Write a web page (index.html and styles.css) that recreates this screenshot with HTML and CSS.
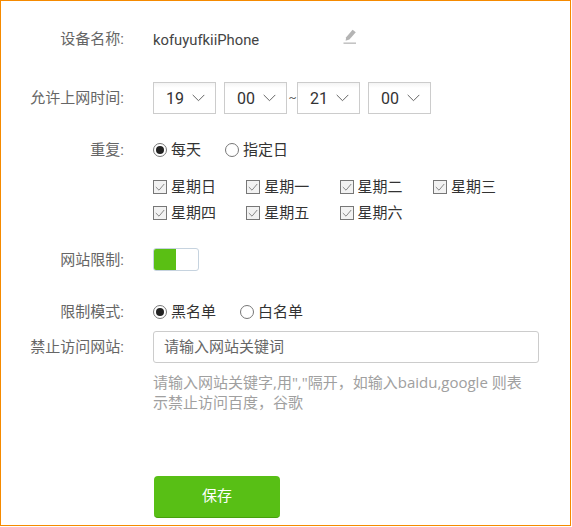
FILE: index.html
```html
<!DOCTYPE html>
<html lang="zh">
<head>
<meta charset="utf-8">
<title>设备设置</title>
<link rel="stylesheet" href="styles.css">
</head>
<body>
<div class="frame">
  <div class="row row-name">
    <div class="label">设备名称:</div>
    <div class="value name-value">
      <span class="device">kofuyufkiiPhone</span>
      <svg class="edit" width="14" height="16" viewBox="0 0 14 16"><path d="M9.6 0.8 L12.8 3.2 L6.4 10.6 L2.6 11.8 L3.2 8.2 Z" fill="#b4b4b4"/><path d="M0.5 14.2 H13" stroke="#c4c4c4" stroke-width="1.6" fill="none"/></svg>
    </div>
  </div>
  <div class="row row-time">
    <div class="label">允许上网时间:</div>
    <div class="value times">
      <div class="select"><span>19</span><svg class="chev" width="13" height="8" viewBox="0 0 13 8"><path d="M0.7 0.9 L6.5 6.7 L12.3 0.9" fill="none" stroke="#666" stroke-width="1"/></svg></div>
      <div class="select"><span>00</span><svg class="chev" width="13" height="8" viewBox="0 0 13 8"><path d="M0.7 0.9 L6.5 6.7 L12.3 0.9" fill="none" stroke="#666" stroke-width="1"/></svg></div>
      <span class="tilde">~</span>
      <div class="select"><span>21</span><svg class="chev" width="13" height="8" viewBox="0 0 13 8"><path d="M0.7 0.9 L6.5 6.7 L12.3 0.9" fill="none" stroke="#666" stroke-width="1"/></svg></div>
      <div class="select"><span>00</span><svg class="chev" width="13" height="8" viewBox="0 0 13 8"><path d="M0.7 0.9 L6.5 6.7 L12.3 0.9" fill="none" stroke="#666" stroke-width="1"/></svg></div>
    </div>
  </div>
  <div class="row row-repeat">
    <div class="label">重复:</div>
    <div class="value radios">
      <span class="radio-item r-daily"><span class="radio on"></span>每天</span>
      <span class="radio-item"><span class="radio"></span>指定日</span>
    </div>
  </div>
  <div class="row row-days">
    <div class="label"></div>
    <div class="value days">
      <span class="day"><span class="check"><svg width="10" height="9" viewBox="0 0 10 9"><path d="M0.8 4 L4 7.2 L9.2 1" fill="none" stroke="#888" stroke-width="1"/></svg></span>星期日</span>
      <span class="day"><span class="check"><svg width="10" height="9" viewBox="0 0 10 9"><path d="M0.8 4 L4 7.2 L9.2 1" fill="none" stroke="#888" stroke-width="1"/></svg></span>星期一</span>
      <span class="day"><span class="check"><svg width="10" height="9" viewBox="0 0 10 9"><path d="M0.8 4 L4 7.2 L9.2 1" fill="none" stroke="#888" stroke-width="1"/></svg></span>星期二</span>
      <span class="day"><span class="check"><svg width="10" height="9" viewBox="0 0 10 9"><path d="M0.8 4 L4 7.2 L9.2 1" fill="none" stroke="#888" stroke-width="1"/></svg></span>星期三</span>
      <span class="day"><span class="check"><svg width="10" height="9" viewBox="0 0 10 9"><path d="M0.8 4 L4 7.2 L9.2 1" fill="none" stroke="#888" stroke-width="1"/></svg></span>星期四</span>
      <span class="day"><span class="check"><svg width="10" height="9" viewBox="0 0 10 9"><path d="M0.8 4 L4 7.2 L9.2 1" fill="none" stroke="#888" stroke-width="1"/></svg></span>星期五</span>
      <span class="day"><span class="check"><svg width="10" height="9" viewBox="0 0 10 9"><path d="M0.8 4 L4 7.2 L9.2 1" fill="none" stroke="#888" stroke-width="1"/></svg></span>星期六</span>
    </div>
  </div>
  <div class="row row-switch">
    <div class="label">网站限制:</div>
    <div class="value"><div class="switch"><span class="switch-on"></span></div></div>
  </div>
  <div class="row row-mode">
    <div class="label">限制模式:</div>
    <div class="value radios">
      <span class="radio-item r-black"><span class="radio on"></span>黑名单</span>
      <span class="radio-item"><span class="radio"></span>白名单</span>
    </div>
  </div>
  <div class="row row-site">
    <div class="label">禁止访问网站:</div>
    <div class="value"><div class="input">请输入网站关键词</div></div>
  </div>
  <div class="row row-hint">
    <div class="label"></div>
    <div class="value hint">请输入网站关键字,用","隔开，如输入baidu,google 则表示禁止访问百度，谷歌</div>
  </div>
  <div class="row row-save">
    <div class="label"></div>
    <div class="value"><div class="save">保存</div></div>
  </div>
</div>
</body>
</html>
```
FILE: styles.css
```css
* { box-sizing: border-box; }
html, body { margin: 0; padding: 0; background: #fff; }
body {
  font-family: Roboto, "Noto Sans CJK SC", sans-serif;
  font-size: 15px;
  color: #333;
}
.frame {
  width: 571px;
  height: 526px;
  border: 1px solid #f58a00;
  padding-top: 28px;
  overflow: hidden;
}
.row { display: flex; align-items: center; }
.label {
  width: 123px;
  flex: none;
  text-align: right;
  color: #666;
  line-height: 20px;
}
.value { margin-left: 29px; flex: none; width: 386px; }
.row-name { height: 20px; }
.name-value { display: flex; align-items: center; }
.device { width: 190px; color: #444; font-size: 14.8px; padding-top: 1px; }
.edit { margin-top: -5px; }
.row-time { margin-top: 33px; height: 32px; }
.times { display: flex; align-items: center; }
.select {
  width: 63px;
  height: 32px;
  border: 1px solid #ccc;
  background: linear-gradient(#f4f4f4, #fff 5px);
  display: flex;
  align-items: center;
  padding-left: 12px;
  font-size: 16px;
  color: #333;
  margin-right: 8px;
}
.select span { width: 25px; }
.chev { margin-left: 1px; }
.tilde { margin: 0 0 0 -7px; width: 9px; color: #666; font-size: 12px; text-align: center; }
.row-repeat { margin-top: 26px; height: 20px; }
.radios { display: flex; align-items: center; }
.radio-item { display: flex; align-items: center; color: #333; line-height: 20px; }
.r-daily { width: 72px; }
.r-black { width: 87px; }
.radio {
  width: 14px;
  height: 14px;
  border-radius: 50%;
  border: 1px solid #777;
  margin-right: 4px;
  display: flex;
  align-items: center;
  justify-content: center;
  background: #fff;
}
.radio.on::after {
  content: "";
  width: 8px;
  height: 8px;
  border-radius: 50%;
  background: #222;
}
.row-days { margin-top: 17px; }
.days { display: flex; flex-wrap: wrap; row-gap: 6px; }
.day { width: 93.3px; display: flex; align-items: center; line-height: 20px; color: #333; }
.check {
  width: 14px;
  height: 14px;
  border: 1px solid #777;
  background: #f2f2f2;
  margin-right: 4px;
  display: flex;
  align-items: center;
  justify-content: center;
}
.row-switch { margin-top: 25px; height: 23px; }
.switch {
  width: 46px;
  height: 23px;
  border: 1px solid #c6d3df;
  border-radius: 3px;
  background: #fff;
  overflow: hidden;
  display: flex;
}
.switch-on { width: 22px; background: #5abf14; }
.row-mode { margin-top: 31px; height: 20px; }
.row-site { margin-top: 9px; height: 32px; }
.input {
  width: 386px;
  height: 32px;
  border: 1px solid #ccc;
  border-radius: 3px;
  padding-left: 10px;
  line-height: 30px;
  color: #666;
}
.row-hint { margin-top: 9px; align-items: flex-start; }
.hint { color: #a0a0a0; line-height: 20px; width: 376px; font-family: "Open Sans", "Noto Sans CJK SC", sans-serif; }
.row-save { margin-top: 64px; }
.save {
  width: 126px;
  height: 42px;
  margin-left: 1px;
  border-radius: 4px;
  background: #58bf15;
  border-bottom: 1px solid #46a00c;
  color: #fff;
  text-align: center;
  line-height: 41px;
}
```
